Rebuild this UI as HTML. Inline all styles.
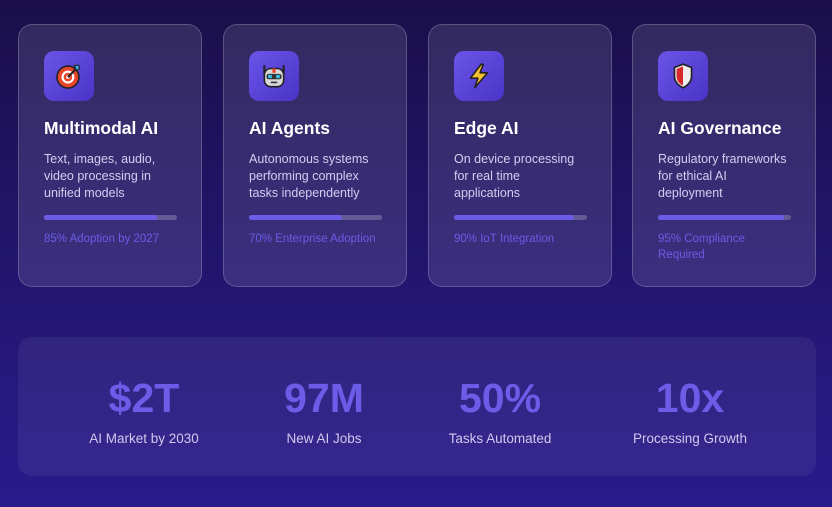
<!DOCTYPE html>
<html><head><meta charset="utf-8"><style>
*{margin:0;padding:0;box-sizing:border-box}
body{width:832px;height:507px;overflow:hidden;font-family:"Liberation Sans","DejaVu Sans",sans-serif;background:linear-gradient(180deg,#1a0f4a 0%,#241673 60%,#2a1a8c 100%);position:relative}
.card{position:absolute;top:24px;width:184px;height:263px;border-radius:14px;background:rgba(255,255,255,0.11);border:1px solid rgba(255,255,255,0.2);padding:0 25px}
.ic{position:absolute;left:25px;top:26px;width:50px;height:50px;border-radius:10px;background:linear-gradient(135deg,#6a55e8,#4a34c8);display:flex;align-items:center;justify-content:center}
.t{position:absolute;left:25px;top:93px;font-size:17.5px;font-weight:bold;color:#fff;white-space:nowrap}
.d{position:absolute;left:25px;top:126px;width:134px;font-size:12.5px;line-height:17px;color:#d4cdf0}
.bar{position:absolute;left:25px;top:190px;width:133px;height:5px;border-radius:3px;background:rgba(255,255,255,0.22)}
.bar i{display:block;height:5px;border-radius:3px;background:#6c5ce7}
.l{position:absolute;left:25px;top:206px;font-size:11.5px;line-height:16px;color:#6c5ce7;width:145px;white-space:nowrap}
.stats{position:absolute;left:18px;top:337px;width:798px;height:139px;border-radius:14px;background:rgba(255,255,255,0.06)}
.s{position:absolute;top:38px;width:200px;text-align:center}
.s b{display:block;font-size:41px;color:#6c5ce7;line-height:46px}
.s span{display:block;font-size:13.5px;color:#cfc8ee;margin-top:10px}
</style></head><body>
<div class="card" style="left:18px">
<div class="ic"><svg width="30" height="30" viewBox="0 0 28 28"><circle cx="13" cy="15" r="11" fill="#222"/><circle cx="13" cy="15" r="9.5" fill="#e8462c"/><circle cx="13" cy="15" r="6" fill="#fff"/><circle cx="13" cy="15" r="4" fill="#e8462c"/><circle cx="13" cy="15" r="1.6" fill="#fff"/><path d="M13 15L22 6" stroke="#222" stroke-width="2"/><path d="M19 4l4 0 1 3-3 2z" fill="#3ab0e8" stroke="#222" stroke-width="1"/></svg></div>
<div class="t">Multimodal AI</div>
<div class="d">Text, images, audio, video processing in unified models</div>
<div class="bar"><i style="width:85%"></i></div>
<div class="l">85% Adoption by 2027</div></div>
<div class="card" style="left:223px">
<div class="ic"><svg width="30" height="30" viewBox="0 0 28 28"><path d="M5 4v8M23 4v8" stroke="#222" stroke-width="2"/><rect x="5" y="7" width="18" height="17" rx="6" fill="#d8d8d8" stroke="#222" stroke-width="1.5"/><rect x="12.5" y="7" width="3" height="4" fill="#e8462c"/><rect x="7" y="12" width="14" height="5" rx="2" fill="#333"/><rect x="8.5" y="13" width="3.5" height="3" fill="#3ac0e8"/><rect x="16" y="13" width="3.5" height="3" fill="#3ac0e8"/><path d="M11 20h6" stroke="#333" stroke-width="1.5"/></svg></div>
<div class="t">AI Agents</div>
<div class="d">Autonomous systems performing complex tasks independently</div>
<div class="bar"><i style="width:70%"></i></div>
<div class="l">70% Enterprise Adoption</div></div>
<div class="card" style="left:428px">
<div class="ic"><svg width="30" height="30" viewBox="0 0 28 28"><path d="M16 3L6 16h7l-3 9 12-14h-7l3-8z" fill="#f7c02e" stroke="#222" stroke-width="1.5" stroke-linejoin="round"/></svg></div>
<div class="t">Edge AI</div>
<div class="d">On device processing<br>for real time<br>applications</div>
<div class="bar"><i style="width:90%"></i></div>
<div class="l">90% IoT Integration</div></div>
<div class="card" style="left:632px">
<div class="ic"><svg width="30" height="30" viewBox="0 0 28 28"><path d="M14 3l8 3v8c0 6-4 9-8 11-4-2-8-5-8-11V6z" fill="#eee" stroke="#222" stroke-width="1.6"/><path d="M14 5l-6 2.5v6.5c0 5 3 7.5 6 9z" fill="#d8282c"/></svg></div>
<div class="t">AI Governance</div>
<div class="d">Regulatory frameworks<br>for ethical AI<br>deployment</div>
<div class="bar"><i style="width:95%"></i></div>
<div class="l">95% Compliance<br>Required</div></div>
<div class="stats">
<div class="s" style="left:26px"><b>$2T</b><span>AI Market by 2030</span></div>
<div class="s" style="left:206px"><b>97M</b><span>New AI Jobs</span></div>
<div class="s" style="left:382px"><b>50%</b><span>Tasks Automated</span></div>
<div class="s" style="left:572px"><b>10x</b><span>Processing Growth</span></div>
</div>
</body></html>
